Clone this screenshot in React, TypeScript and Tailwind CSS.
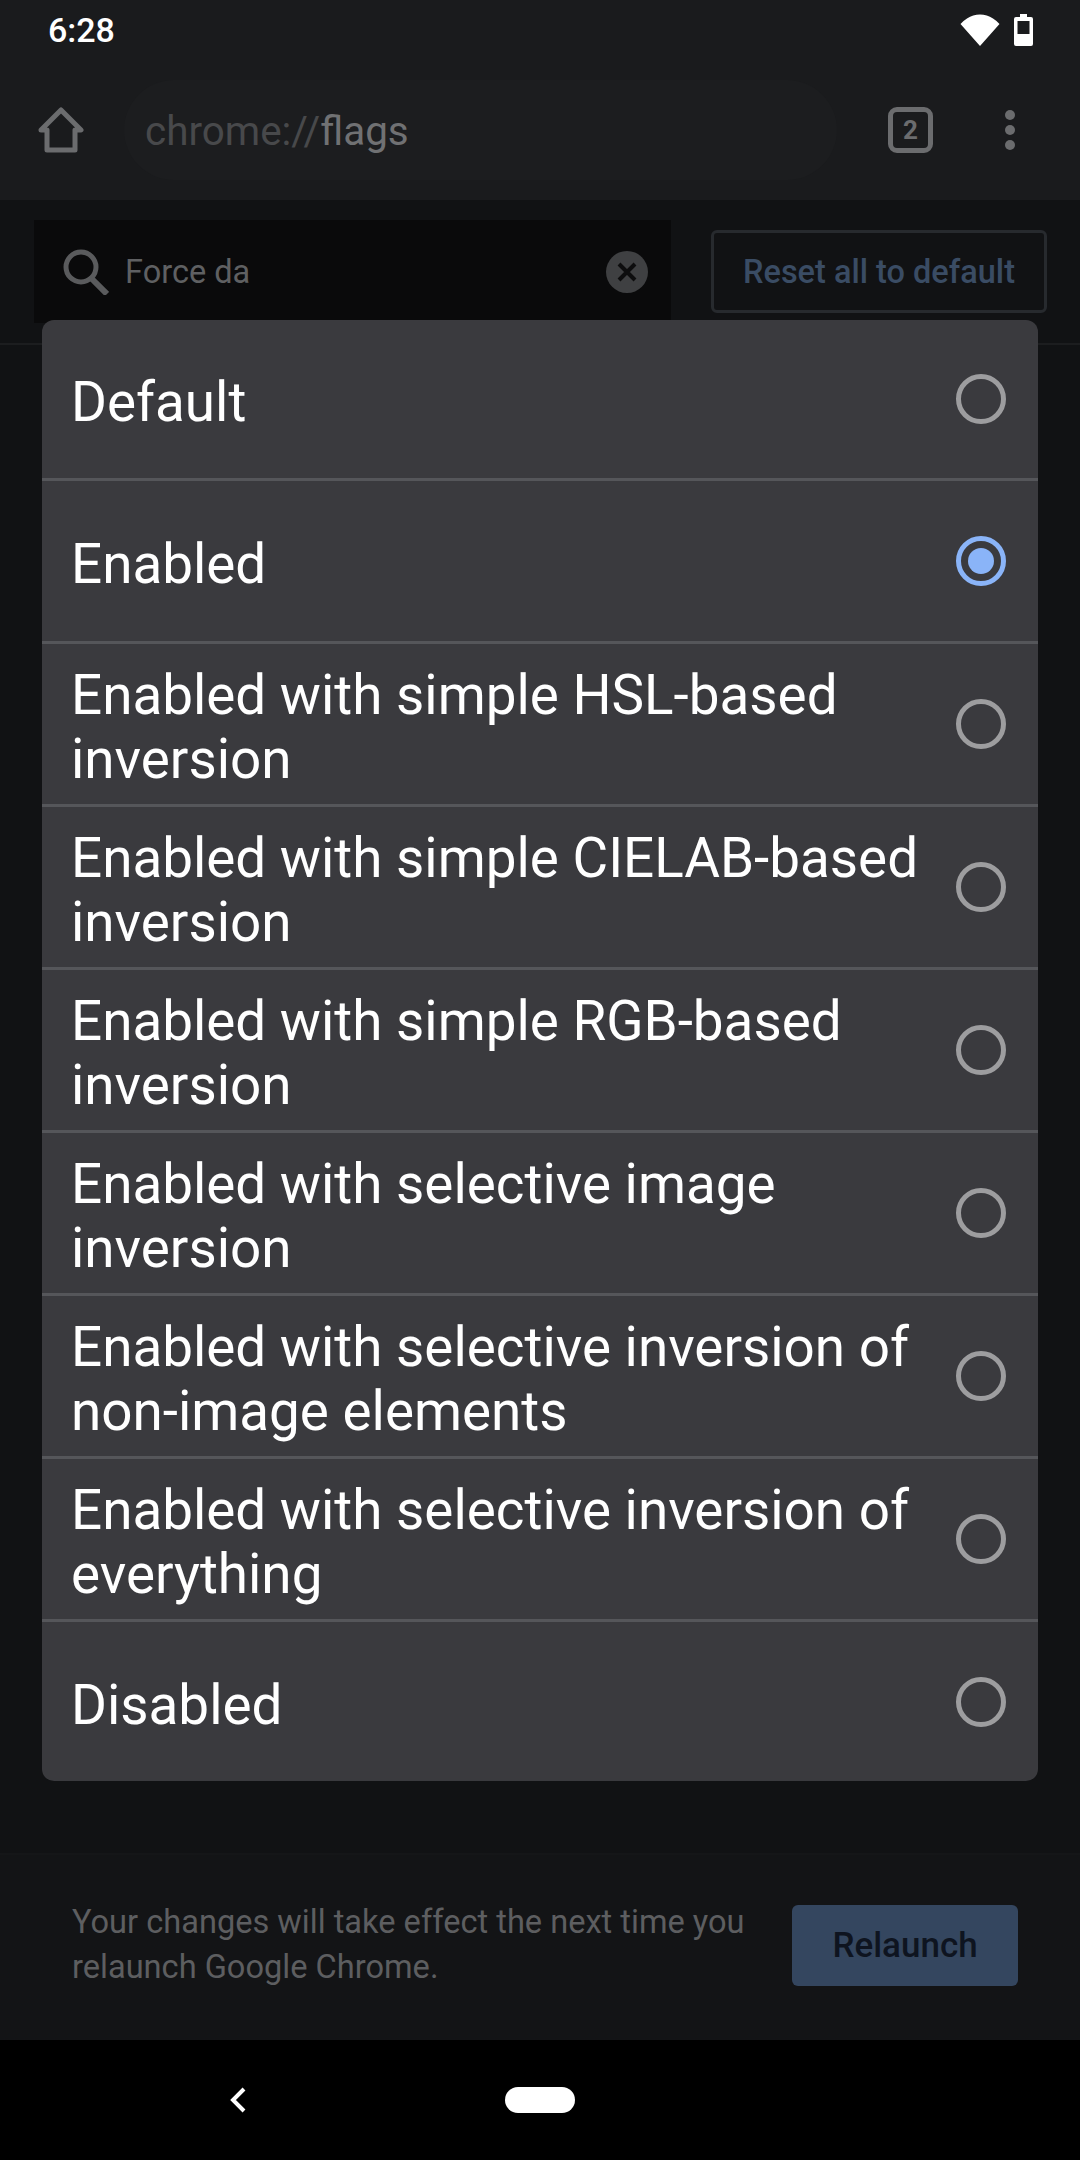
const options = [
  'Default',
  'Enabled',
  'Enabled with simple HSL-based inversion',
  'Enabled with simple CIELAB-based inversion',
  'Enabled with simple RGB-based inversion',
  'Enabled with selective image inversion',
  'Enabled with selective inversion of non-image elements',
  'Enabled with selective inversion of everything',
  'Disabled',
];

function Radio({ checked }: { checked: boolean }) {
  if (checked) {
    return (
      <div className="flex h-[50px] w-[50px] shrink-0 items-center justify-center rounded-full border-[5px] border-[#8ab4f8]">
        <div className="h-[26px] w-[26px] rounded-full bg-[#8ab4f8]" />
      </div>
    );
  }
  return <div className="h-[50px] w-[50px] shrink-0 rounded-full border-[5px] border-[#9d9d9f]" />;
}

export default function App() {
  return (
    <div className="relative flex h-[2160px] w-[1080px] flex-col overflow-hidden bg-[#111214] font-['Roboto',sans-serif]">
      {/* status bar + toolbar */}
      <div className="h-[200px] shrink-0 bg-[#1a1b1d]">
        <div className="flex h-[60px] items-center justify-between pl-[48px] pr-[47px]">
          <span className="text-[34px] font-medium leading-none text-white">6:28</span>
          <div className="flex items-center gap-[14px]">
            <svg width="40" height="32" viewBox="0 0 40 32">
              <path d="M20 32 L0.5 10 Q3 7 7 4.5 Q13 0.5 20 0.5 Q27 0.5 33 4.5 Q37 7 39.5 10 Z" fill="#fff" />
            </svg>
            <svg width="19" height="32" viewBox="0 0 19 32">
              <path
                fillRule="evenodd"
                d="M6 0 H13 V3 H17 Q19 3 19 5 V30 Q19 32 17 32 H2 Q0 32 0 30 V5 Q0 3 2 3 H6 Z M3.5 7 V20 H15.5 V7 Z"
                fill="#fff"
              />
            </svg>
          </div>
        </div>
        <div className="flex h-[140px] items-center">
          <svg className="ml-[38px] shrink-0" width="46" height="46" viewBox="0 0 46 46" fill="none">
            <path d="M3 23 L23 3 L43 23 H37 V43 H9 V23 Z" stroke="#6b6c6e" strokeWidth="5" strokeLinejoin="round" />
          </svg>
          <div className="ml-[40px] flex h-[100px] w-[713px] shrink-0 items-center rounded-full bg-[#1c1d1f] pl-[21px] pt-[5px] text-[40.4px]">
            <span className="text-[#48494b]">chrome://</span>
            <span className="text-[#707173]">flags</span>
          </div>
          <div className="ml-[51px] flex h-[46px] w-[45px] shrink-0 items-center justify-center rounded-[9px] border-[5px] border-[#6b6c6e] text-[26px] font-bold text-[#6b6c6e]">
            2
          </div>
          <div className="ml-[72px] flex shrink-0 flex-col gap-[5px]">
            <div className="h-[10px] w-[10px] rounded-full bg-[#6b6c6e]" />
            <div className="h-[10px] w-[10px] rounded-full bg-[#6b6c6e]" />
            <div className="h-[10px] w-[10px] rounded-full bg-[#6b6c6e]" />
          </div>
        </div>
      </div>

      {/* search row */}
      <div className="flex h-[145px] shrink-0 items-start border-b-2 border-[#1c1d1f] pl-[34px]">
        <div className="mt-[20px] flex h-[103px] w-[637px] shrink-0 items-center bg-[#0a0a0b] pl-[29px]">
          <svg width="46" height="46" viewBox="0 0 46 46" fill="none" stroke="#5a5b5d" strokeWidth="5">
            <circle cx="18" cy="18" r="15" />
            <path d="M28 29 L44 45" strokeWidth="6" />
          </svg>
          <span className="ml-[16px] pt-[2px] text-[32.5px] text-[#5f6062]">Force da</span>
          <div className="ml-auto mr-[23px] flex h-[42px] w-[42px] items-center justify-center rounded-full bg-[#3f4042]">
            <svg width="22" height="22" viewBox="0 0 22 22" stroke="#0d0d0e" strokeWidth="4">
              <path d="M3 3 L19 19 M19 3 L3 19" />
            </svg>
          </div>
        </div>
        <div className="ml-[40px] mt-[30px] flex h-[83px] w-[336px] shrink-0 items-center justify-center rounded-[6px] border-[3px] border-[#272a2e] pt-[2px] text-[32.5px] font-medium text-[#3a4c64]">
          Reset all to default
        </div>
      </div>

      <div className="flex-1" />

      {/* relaunch footer */}
      <div className="flex h-[187px] shrink-0 items-center border-t-2 border-[#151618] bg-[#131416] pb-[6px] pl-[72px]">
        <p className="w-[690px] shrink-0 text-[32.6px] leading-[45px] text-[#5d5e60]">
          Your changes will take effect the next time you relaunch Google Chrome.
        </p>
        <div className="ml-[30px] mt-[2px] flex h-[81px] w-[226px] shrink-0 items-center justify-center rounded-[6px] bg-[#34465f] pt-[2px] text-[35px] font-medium text-[#0e1420]">
          Relaunch
        </div>
      </div>

      {/* nav bar */}
      <div className="flex h-[120px] shrink-0 items-center bg-black">
        <svg className="ml-[230px]" width="16" height="26" viewBox="0 0 16 26" fill="none" stroke="#fff" strokeWidth="4">
          <path d="M14 2 L3 13 L14 24" />
        </svg>
        <div className="ml-[259px] h-[26px] w-[70px] rounded-full bg-white" />
      </div>

      {/* options dialog */}
      <div className="absolute left-[42px] top-[320px] w-[996px] overflow-hidden rounded-[12px] bg-[#3a3a3e]">
        {options.map((label, i) => (
          <div
            key={label}
            className={
              i === 0
                ? 'flex h-[161px] items-center justify-between border-b-[3px] border-[#55565a] pl-[29px] pr-[32px]'
                : i === options.length - 1
                  ? 'flex h-[159px] items-center justify-between pl-[29px] pr-[32px]'
                  : 'flex h-[163px] items-center justify-between border-b-[3px] border-[#55565a] pl-[29px] pr-[32px]'
            }
          >
            <span className="w-[860px] pt-[6px] text-[54.8px] leading-[64px] text-white">{label}</span>
            <Radio checked={i === 1} />
          </div>
        ))}
      </div>
    </div>
  );
}
